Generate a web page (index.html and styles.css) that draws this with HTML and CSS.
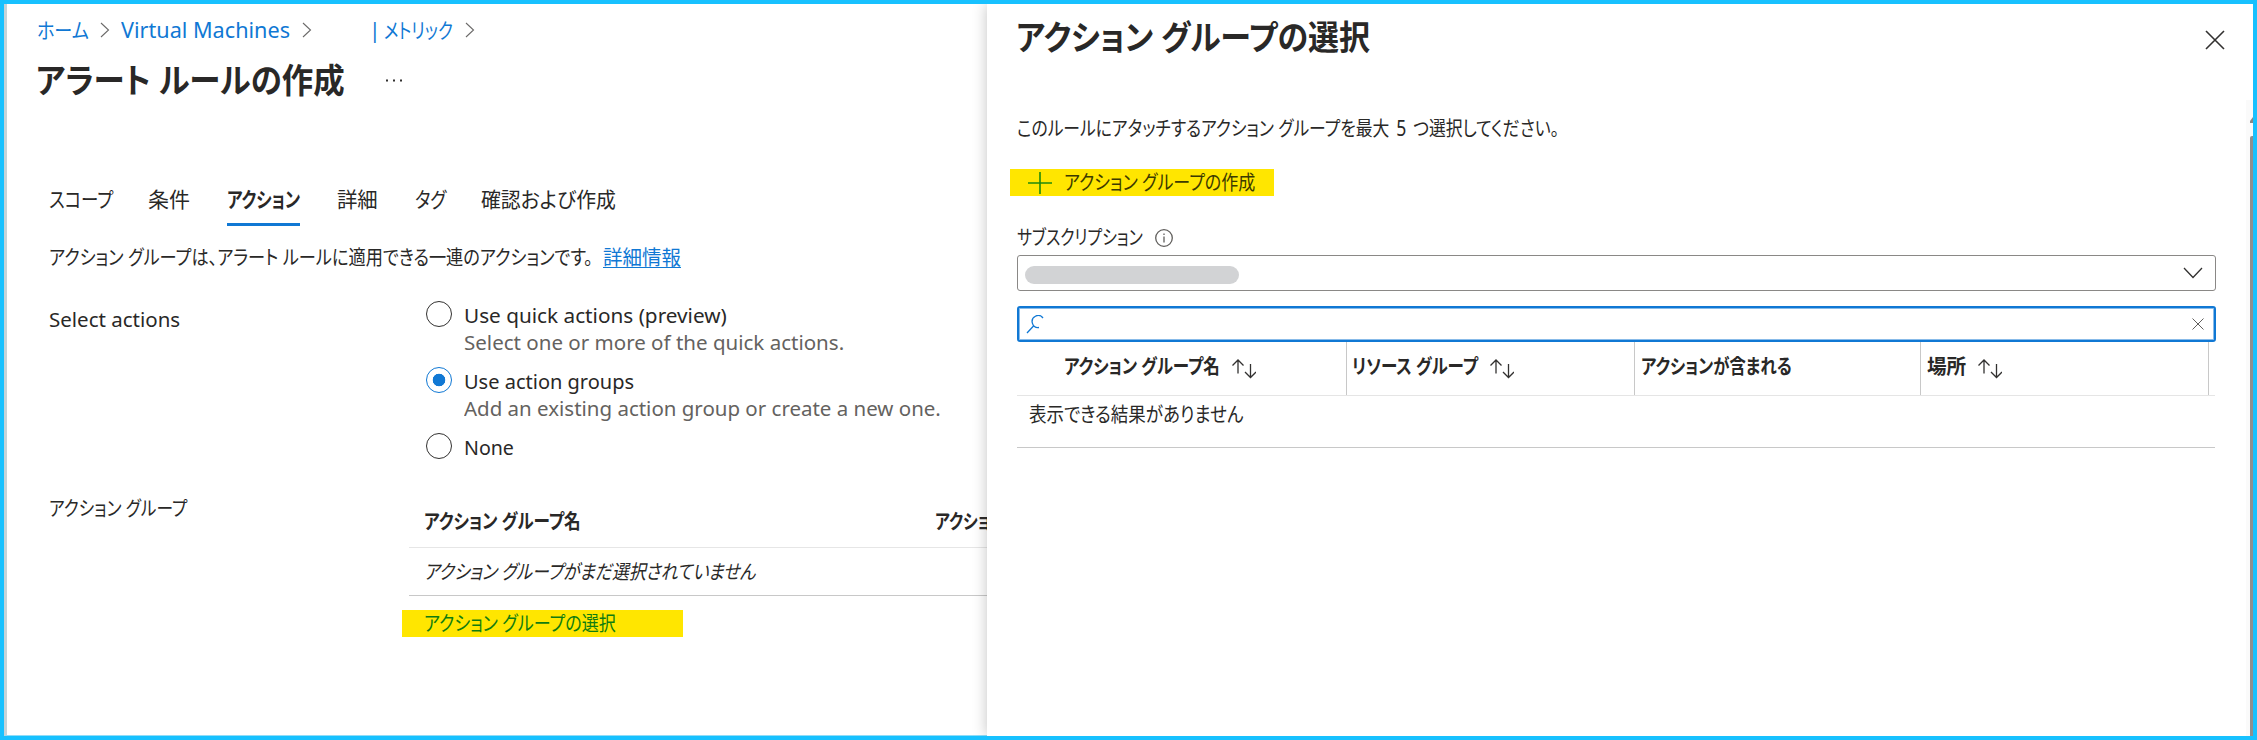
FILE: index.html
```html
<!DOCTYPE html>
<html lang="ja">
<head>
<meta charset="utf-8">
<title>アラート ルールの作成</title>
<link rel="stylesheet" href="styles.css">
</head>
<body>
<div class="frame">
  <main class="blade">
    <nav class="breadcrumb">
      <a class="crumb crumb-home"><span class="fit">ホーム</span></a>
      <svg class="sep" viewBox="0 0 10 16"><path d="M1 1l7.500 7L1 15"/></svg>
      <a class="crumb crumb-vm"><span class="fit">Virtual Machines</span></a>
      <svg class="sep" viewBox="0 0 10 16"><path d="M1 1l7.500 7L1 15"/></svg>
      <a class="crumb crumb-bar">|</a>
      <a class="crumb crumb-metric"><span class="fit">メトリック</span></a>
      <svg class="sep" viewBox="0 0 10 16"><path d="M1 1l7.500 7L1 15"/></svg>
    </nav>
    <header class="title-row">
      <h1 class="title"><span class="fit">アラート ルールの作成</span></h1>
      <svg class="dots" viewBox="0 0 16 3"><path d="M0 .5h2v2H0zM7 .5h2v2H7zM14 .5h2v2h-2z"/></svg>
    </header>
    <div class="tabs">
      <a class="tab tab-scope"><span class="fit">スコープ</span></a>
      <a class="tab tab-cond"><span class="fit">条件</span></a>
      <a class="tab tab-action active"><span class="fit">アクション</span></a>
      <a class="tab tab-detail"><span class="fit">詳細</span></a>
      <a class="tab tab-tag"><span class="fit">タグ</span></a>
      <a class="tab tab-review"><span class="fit">確認および作成</span></a>
    </div>
    <p class="intro"><span class="intro-text"><span class="fit">アクション グループは、アラート ルールに適用できる一連のアクションです。</span></span><a class="more"><span class="fit">詳細情報</span></a></p>
    <section class="field">
      <div class="label label-select"><span class="fit">Select actions</span></div>
      <div class="options">
        <div class="option"><i class="radio"></i><div><div class="opt-name opt-quick"><span class="fit">Use quick actions (preview)</span></div><div class="opt-sub sub-quick"><span class="fit">Select one or more of the quick actions.</span></div></div></div>
        <div class="option"><i class="radio checked"></i><div><div class="opt-name"><span class="fit">Use action groups</span></div><div class="opt-sub sub-group"><span class="fit">Add an existing action group or create a new one.</span></div></div></div>
        <div class="option"><i class="radio"></i><div><div class="opt-name opt-none"><span class="fit">None</span></div></div></div>
      </div>
    </section>
    <section class="field field-groups">
      <div class="label label-group"><span class="fit">アクション グループ</span></div>
      <div class="groups">
        <div class="groups-head"><div class="col-name"><span class="fit">アクション グループ名</span></div><div class="col-action"><span class="fit">アクション</span></div></div>
        <div class="groups-empty"><span class="fit">アクション グループがまだ選択されていません</span></div>
        <a class="pick"><span class="fit">アクション グループの選択</span></a>
      </div>
    </section>
  </main>
  <aside class="panel">
    <div class="panel-body">
      <header class="panel-head">
        <h2 class="panel-title"><span class="fit">アクション グループの選択</span></h2>
        <svg class="close" viewBox="0 0 20 20"><path d="M1 1l18 18M19 1L1 19"/></svg>
      </header>
      <p class="panel-intro"><span class="fit">このルールにアタッチするアクション グループを最大 <span class="count">5</span> つ選択してください。</span></p>
      <a class="create">
        <svg class="plus" viewBox="0 0 24 24"><path d="M0 12h24M12 1v22"/></svg>
        <span class="fit">アクション グループの作成</span>
      </a>
      <div class="sub-label"><span class="sub-name"><span class="fit">サブスクリプション</span></span>
        <svg class="info" viewBox="0 0 18 18"><circle cx="9" cy="9" r="8.300"/><path d="M9 7.500v6M9 4.500v1.500"/></svg>
      </div>
      <div class="select"><span class="mask"></span><svg class="chev" viewBox="0 0 20 12"><path d="M1 1l9 9.500L19 1"/></svg></div>
      <div class="search">
        <svg class="lens" viewBox="0 0 18 19"><path d="M17 3A6 6 0 1 0 13 12.500M7.500 11L1 18"/></svg>
        <svg class="clear" viewBox="0 0 12 12"><path d="M.5.5l11 11M11.500.5l-11 11"/></svg>
      </div>
      <div class="grid-head">
        <div class="gh gh-name"><span class="gh-text"><span class="fit">アクション グループ名</span></span><svg class="sort" viewBox="0 0 24 20"><path d="M6 14.500V1M.5 6.500L6 1l5.500 5.500M18.500 5v13.500M13 13l5.500 5.500L24 13"/></svg></div>
        <div class="gh gh-res"><span class="gh-text"><span class="fit">リソース グループ</span></span><svg class="sort" viewBox="0 0 24 20"><path d="M6 14.500V1M.5 6.500L6 1l5.500 5.500M18.500 5v13.500M13 13l5.500 5.500L24 13"/></svg></div>
        <div class="gh gh-inc"><span class="gh-text"><span class="fit">アクションが含まれる</span></span></div>
        <div class="gh gh-loc"><span class="gh-text"><span class="fit">場所</span></span><svg class="sort" viewBox="0 0 24 20"><path d="M6 14.500V1M.5 6.500L6 1l5.500 5.500M18.500 5v13.500M13 13l5.500 5.500L24 13"/></svg></div>
      </div>
      <div class="grid-empty"><span class="fit">表示できる結果がありません</span></div>
    </div>
    <div class="scroll"><svg class="up" viewBox="0 0 3 6"><path d="M0 6V4L3 0v6z"/></svg><div class="thumb"></div></div>
  </aside>
</div>
</body>
</html>
```
FILE: styles.css
```css
* { box-sizing: border-box; }
body {
  margin: 0;
  font: 20px/24px "Noto Sans", "Noto Sans CJK JP", sans-serif;
  color: #292827;
  font-feature-settings: "palt";
  white-space: nowrap;
}
h1, h2, p { margin: 0; }
svg { display: block; flex: none; fill: none; stroke: #323130; stroke-width: 1.3; }

/* Condenses the Japanese text horizontally; --k is the width factor. */
.fit { display: inline-block; transform: scaleX(var(--k, 1)); transform-origin: 0 50%; }

.frame {
  display: flex;
  width: 2257px;
  height: 740px;
  border: 4px solid #17c1ff;
  background: #fff;
  overflow: hidden;
}
.blade {
  width: 983px;
  flex: none;
  border-left: 3px solid #c5d3d8;
  border-bottom: 1px solid #8fdcf8;
  overflow: hidden;
}

.breadcrumb { display: flex; align-items: center; height: 28px; margin-top: 12px; padding-left: 30px; font-size: 21px; }
.crumb { color: #1078d4; }
.sep { width: 10px; height: 16px; stroke: #6b6a69; stroke-width: 1.1; }
.crumb-home { width: 63px; --k: .86; }
.crumb-vm { width: 181px; margin-left: 11px; --k: 1.03; }
.crumb-bar { width: 15px; margin-left: 57px; }
.crumb-metric { width: 81px; --k: .79; }

.title-row { display: flex; align-items: center; height: 42px; margin-top: 15px; padding-left: 29px; }
.title { width: 350px; font-size: 34px; line-height: 42px; font-weight: 700; --k: .925; }
.dots { width: 16px; height: 3px; fill: #323130; stroke: none; }

.tabs { display: flex; margin: 85px 0 0 42px; font-size: 21px; height: 40px; line-height: 26px; }
.tab { height: 40px; border-bottom: 3px solid transparent; }
.tab.active { border-color: #1078d4; font-weight: 700; }
.tab-scope { width: 99px; --k: .83; }
.tab-cond { width: 79px; }
.tab-action { width: 73px; margin-right: 37px; --k: .785; }
.tab-detail { width: 78px; --k: .97; }
.tab-tag { width: 66px; --k: .84; }
.tab-review { --k: .945; }

.intro { display: flex; margin: 19px 0 0 42px; height: 26px; line-height: 25px; }
.intro-text { width: 554px; --k: .86; }
.more { width: 78px; --k: .975; color: #1078d4; }
.more .fit { text-decoration: underline; text-decoration-thickness: 1px; text-underline-offset: 2px; }

.field { display: flex; margin: 30px 0 0 42px; }
.label { width: 360px; flex: none; }
.label-select { padding-top: 7px; --k: 1.025; }
.options { padding-left: 17px; }
.option { display: flex; gap: 12px; height: 66px; line-height: 29px; }
.radio { width: 26px; height: 26px; border: 1.500px solid #323130; border-radius: 50%; flex: none; }
.radio.checked { border-color: #1078d4; background: radial-gradient(circle, #1078d4 6px, transparent 6.600px); }
.opt-name { height: 30px; }
.opt-quick { --k: 1.037; }
.opt-none { --k: .98; }
.opt-sub { line-height: 23px; color: #646260; }
.sub-quick { --k: 1.026; }
.sub-group { --k: 1.024; }

.field-groups { margin-top: -2px; }
.label-group { line-height: 23px; --k: .835; }
.groups { width: 582px; }
.groups-head { display: flex; height: 51px; padding: 0 0 0 15px; line-height: 50px; font-weight: 700; border-bottom: 1px solid #e6e6e6; }
.col-name { width: 511px; flex: none; --k: .83; }
.col-action { --k: .79; }
.groups-empty { height: 48px; padding-left: 15px; line-height: 48px; font-style: italic; border-bottom: 1px solid #c8c8c8; --k: .84; }
.pick { display: block; width: 281px; height: 27px; margin: 14px 0 0 -7px; padding-left: 22px; line-height: 27px; background: #ffe600; color: #107c10; --k: .853; }

.panel { display: flex; width: 1266px; flex: none; background: #fff; box-shadow: 0 0 14px rgba(0, 0, 0, .24); }
.panel-body { width: 1259px; flex: none; padding-left: 30px; padding-right: 30px; }
.panel-head { display: flex; justify-content: space-between; width: 1209px; height: 96px; padding-top: 12px; }
.panel-title { width: 400px; margin-left: -1px; font-size: 34px; line-height: 43px; font-weight: 700; --k: .911; }
.close { width: 20px; height: 20px; margin: 14px 1px 0 0; stroke-width: 1.6; }
.panel-intro { height: 26px; margin-top: 17px; line-height: 24px; --k: .84; }
.count { margin: 0 3px; font-size: 21px; line-height: 20px; }
.create { display: flex; align-items: center; width: 264px; height: 27px; margin: 26px 0 0 -7px; padding-left: 18px; background: #ffe600; color: #3c3a00; --k: .85; }
.plus { width: 24px; height: 24px; margin-right: 12px; stroke: #1f8a0c; stroke-width: 1.6; }
.sub-label { display: flex; align-items: center; height: 26px; margin-top: 29px; --k: .795; }
.sub-name { width: 138px; }
.info { width: 18px; height: 18px; stroke: #605e5c; stroke-width: 1.3; }
.select { display: flex; align-items: center; justify-content: space-between; width: 1199px; height: 36px; margin-top: 4px; padding: 3px 12px 0 7px; border: 1px solid #8a8886; border-radius: 3px; }
.mask { width: 214px; height: 18px; border-radius: 9px; background: #d2d3d5; }
.chev { width: 20px; height: 12px; margin-top: -4px; }
.search { display: flex; align-items: center; justify-content: space-between; width: 1199px; height: 36px; margin-top: 15px; padding: 0 10px 0 7px; border: 2px solid #1078d4; border-radius: 3px; box-shadow: inset 0 0 0 1px #88bbe9; }
.lens { width: 18px; height: 19px; stroke: #1078d4; }
.clear { width: 12px; height: 12px; stroke: #605e5c; stroke-width: 1; }
.grid-head { display: flex; width: 1198px; height: 54px; border-bottom: 1px solid #e5e5e5; font-weight: 700; }
.gh { display: flex; height: 53px; padding-left: 6px; line-height: 50px; border-right: 1px solid #c8c8c8; }
.sort { width: 24px; height: 20px; margin-top: 17px; }
.gh-name { width: 330px; padding-left: 47px; --k: .825; }
.gh-name .gh-text { width: 168px; }
.gh-res { width: 288px; padding-left: 5px; --k: .825; }
.gh-res .gh-text { width: 138px; }
.gh-inc { width: 286px; --k: .815; }
.gh-loc { width: 288px; --k: .98; }
.gh-loc .gh-text { width: 51px; }
.grid-empty { height: 52px; width: 1198px; padding-left: 12px; line-height: 38px; border-bottom: 1px solid #c8c8c8; --k: .875; }

.scroll { width: 7px; height: 640px; margin-top: 96px; padding-left: 4px; background: #fafafa; }
.up { width: 3px; height: 6px; margin: 17px 0 13px; fill: #8a8886; stroke: none; }
.thumb { width: 3px; height: 620px; background: #8f8f8f; border-radius: 2px 0 0 0; }
```
